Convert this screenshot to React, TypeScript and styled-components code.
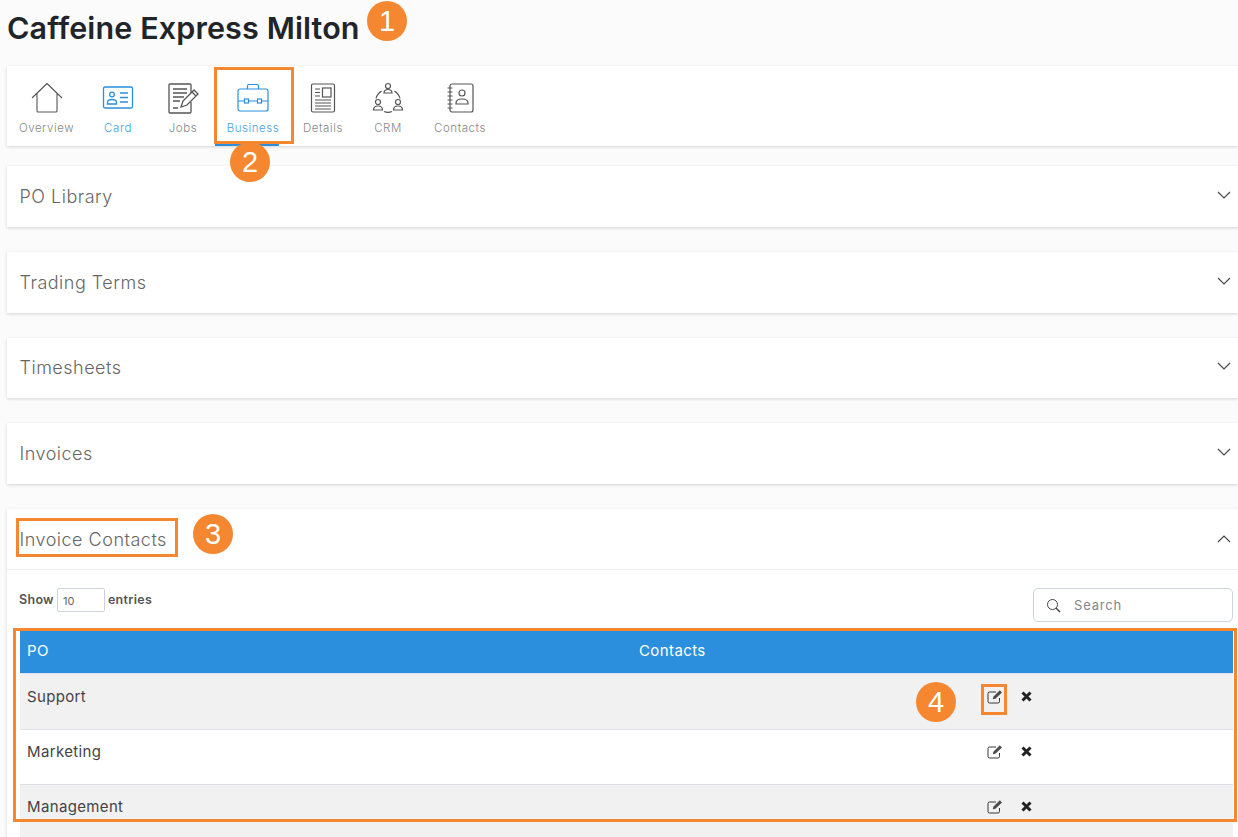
import styled, { createGlobalStyle } from "styled-components";

const GlobalStyle = createGlobalStyle`
  html, body {
    margin: 0;
    padding: 0;
    height: 837px;
    overflow: hidden;
    background: #fbfbfb;
    font-family: Inter, "Liberation Sans", sans-serif;
  }
  * {
    box-sizing: border-box;
  }
`;

const Page = styled.div`
  position: relative;
  width: 1238px;
  height: 837px;
  overflow: hidden;
  padding-left: 7px;
`;

const Title = styled.h1`
  margin: 0;
  height: 66px;
  padding-top: 10px;
  font-size: 30.5px;
  line-height: 36px;
  font-weight: 600;
  letter-spacing: 0.12px;
  color: #212529;
`;

const Card = styled.section`
  width: 1231px;
  background: #fff;
  box-shadow: 0 1px 3px rgba(0, 0, 0, 0.16);
`;

const Nav = styled(Card)`
  display: flex;
  height: 80px;
  padding-left: 5px;
  margin-bottom: 20px;
`;

interface ITab {
  $width: number;
  $blue?: boolean;
  $active?: boolean;
}

const Tab = styled.div<ITab>`
  position: relative;
  width: ${(props) => props.$width}px;
  height: 80px;
  padding-top: 16px;
  display: flex;
  flex-direction: column;
  align-items: center;
  color: ${(props) => (props.$blue ? "#2b8fdd" : "#555")};
  svg {
    display: block;
  }
  &::after {
    content: "";
    display: ${(props) => (props.$active ? "block" : "none")};
    position: absolute;
    left: 4px;
    bottom: 0;
    width: 64px;
    height: 3px;
    background: #2b8fdd;
  }
`;

const TabLabel = styled.span<{ $blue?: boolean }>`
  margin-top: 6px;
  font-size: 11.5px;
  line-height: 16px;
  font-weight: 300;
  letter-spacing: 0.55px;
  color: ${(props) => (props.$blue ? "#4a9fe2" : "#888")};
`;

const Accordion = styled(Card)`
  height: 60.75px;
  margin-bottom: 25px;
  padding: 0 7px 0 12.5px;
  display: flex;
  align-items: center;
  justify-content: space-between;
`;

const AccordionTitle = styled.span`
  font-size: 18px;
  font-weight: 300;
  letter-spacing: 0.5px;
  color: #666;
`;

const OpenCard = styled(Card)`
  padding: 0 5px 40px 13px;
`;

const OpenHeader = styled.div`
  height: 61px;
  margin: 0 -5px 0 -13px;
  padding: 0 7px 0 12.5px;
  border-bottom: 1px solid #f0f0f0;
  display: flex;
  align-items: center;
  justify-content: space-between;
`;

const Controls = styled.div`
  height: 61px;
  padding-top: 18px;
  margin-left: -1px;
  display: flex;
  justify-content: space-between;
  align-items: flex-start;
`;

const Show = styled.label`
  display: flex;
  align-items: center;
  gap: 3px;
  font-size: 12.5px;
  line-height: 24px;
  font-weight: 600;
  letter-spacing: 0.3px;
  color: #555;
`;

const EntriesInput = styled.div`
  width: 48px;
  height: 24px;
  border: 1px solid #ced4da;
  border-radius: 2px;
  padding-left: 5px;
  font-size: 11px;
  line-height: 24px;
  font-weight: 400;
  letter-spacing: 0;
  color: #666;
`;

const SearchBox = styled.div`
  width: 200px;
  height: 34px;
  border: 1px solid #ced4da;
  border-radius: 5px;
  padding-left: 12px;
  display: flex;
  align-items: center;
  gap: 13px;
  font-size: 13px;
  letter-spacing: 0.8px;
  color: #80868f;
`;

const Table = styled.table`
  width: 1213px;
  border-collapse: collapse;
  table-layout: fixed;
`;

const HeadCell = styled.th<{ $width?: number }>`
  width: ${(props) => (props.$width ? `${props.$width}px` : "auto")};
  height: 42px;
  padding: 0 7px 2px;
  background: #2b8fdd;
  color: #fff;
  text-align: left;
  font-size: 15px;
  font-weight: 400;
  letter-spacing: 0.4px;
`;

const Cell = styled.td`
  padding: 12px 7px 0;
  vertical-align: top;
  font-size: 15px;
  line-height: 20px;
  font-weight: 400;
  letter-spacing: 0.35px;
  color: #444;
`;

const Row = styled.tr<{ $height: number; $striped?: boolean }>`
  height: ${(props) => props.$height}px;
  background: ${(props) => (props.$striped ? "#f1f1f1" : "#fff")};
  border-top: 1px solid #dee0e6;
  &:first-child ${Cell} {
    padding-top: 13px;
  }
`;

const Actions = styled.div`
  display: flex;
  align-items: flex-start;
  gap: 18px;
  padding-top: 2px;
  color: #222;
`;

const Highlight = styled.div<{ $x: number; $y: number; $w: number; $h: number }>`
  position: absolute;
  left: ${(props) => props.$x}px;
  top: ${(props) => props.$y}px;
  width: ${(props) => props.$w}px;
  height: ${(props) => props.$h}px;
  border: 3px solid #f58731;
  pointer-events: none;
`;

const Marker = styled.div<{ $x: number; $y: number }>`
  position: absolute;
  left: ${(props) => props.$x - 20}px;
  top: ${(props) => props.$y - 20}px;
  width: 40px;
  height: 40px;
  border-radius: 50%;
  background: #f58731;
  color: #fff;
  display: flex;
  align-items: center;
  justify-content: center;
  font-family: "Liberation Sans", Arial, sans-serif;
  font-size: 29px;
`;

const Chevron = ({ up }: { up?: boolean }) => (
  <svg width="14" height="9" viewBox="0 0 14 9" fill="none" stroke="#444" strokeWidth="1.1" style={{ marginBottom: 2 }}>
    <path d={up ? "M1 8l6-6 6 6" : "M1 1l6 6 6-6"} />
  </svg>
);

const HouseIcon = () => (
  <svg width="32" height="32" viewBox="0 0 32 32" fill="none" stroke="currentColor" strokeWidth="1.1" strokeLinejoin="round">
    <path d="M1 16L16 1.500 31 16M6 11.500V29a1 1 0 0 0 1 1h18a1 1 0 0 0 1-1V11.500" />
  </svg>
);

const CardIcon = () => (
  <svg width="32" height="32" viewBox="0 0 32 32" fill="none" stroke="currentColor" strokeWidth="1.3">
    <rect x="1.500" y="5" width="29" height="21" rx="1.500" />
    <circle cx="10" cy="12.500" r="2.300" />
    <path d="M5.500 22v-1.500c0-2 2-3 4.500-3s4.500 1 4.500 3V22z" />
    <path d="M18 11h8M18 15.500h8M18 20h8" strokeWidth="1.600" />
  </svg>
);

const JobsIcon = () => (
  <svg width="32" height="32" viewBox="0 0 32 32" fill="none" stroke="currentColor" strokeWidth="1.300">
    <path d="M24 11V3a1 1 0 0 0-1-1H3a1 1 0 0 0-1 1v27a1 1 0 0 0 1 1h20a1 1 0 0 0 1-1V20" />
    <path d="M6 7h14M6 11h14M6 15h11M6 19h7M6 26h5" />
    <path d="M14 25l2-6L27 8l4 4-11 11zM25 10l4 4" />
  </svg>
);

const CaseIcon = () => (
  <svg width="32" height="32" viewBox="0 0 32 32" fill="none" stroke="currentColor" strokeWidth="1.200">
    <rect x="1" y="7" width="30" height="22" rx="2" />
    <path d="M10.500 7V4A1.500 1.500 0 0 1 12 2.500h8A1.500 1.500 0 0 1 21.500 4v3M1 19h6.500M11.500 19h9M24.500 19H31" />
    <rect x="7.500" y="17" width="4" height="4" />
    <rect x="20.500" y="17" width="4" height="4" />
  </svg>
);

const DetailsIcon = () => (
  <svg width="32" height="32" viewBox="0 0 32 32" fill="none" stroke="currentColor" strokeWidth="1.200">
    <rect x="4.500" y="2" width="23" height="28" rx="1.500" />
    <path d="M8 7h5M8 10.500h5M8 14h5" />
    <rect x="15.500" y="6" width="8.500" height="9" />
    <path d="M8 18h16M8 21h16M8 24h16M8 27h16" />
  </svg>
);

const CrmIcon = () => (
  <svg width="32" height="32" viewBox="0 0 32 32" fill="none" stroke="currentColor" strokeWidth="1.200">
    <circle cx="16" cy="4" r="2.500" />
    <path d="M12 11c0-2.500 2-3.500 4-3.500s4 1 4 3.500z" />
    <circle cx="6" cy="20" r="2.500" />
    <path d="M1.500 28c0-3 2-4 4.500-4s4.500 1 4.500 4z" />
    <circle cx="26" cy="20" r="2.500" />
    <path d="M21.500 28c0-3 2-4 4.500-4s4.500 1 4.500 4z" />
    <path d="M9.500 9C6 11.500 4.500 14 4 16.500M22.500 9c3.500 2.500 5 5 5.500 7.500M12 29.500c2.500 1 5.500 1 8 0" />
  </svg>
);

const ContactsIcon = () => (
  <svg width="32" height="32" viewBox="0 0 32 32" fill="none" stroke="currentColor" strokeWidth="1.200">
    <rect x="6" y="2" width="23" height="28" rx="2" />
    <path d="M3.500 6h5M3.500 10h5M3.500 14h5M3.500 18h5M3.500 22h5M3.500 26h5" />
    <circle cx="18" cy="11" r="3" />
    <path d="M12 22v-1c0-2.500 2.500-4 6-4s6 1.500 6 4v1z" />
  </svg>
);

const SearchIcon = () => (
  <svg width="15" height="15" viewBox="0 0 15 15" fill="none" stroke="#444" strokeWidth="1">
    <circle cx="6.500" cy="6.500" r="5" />
    <path d="M10 10l4 4" strokeWidth="1.400" />
  </svg>
);

const EditIcon = () => (
  <svg width="16" height="15" viewBox="0 0 16 15" fill="none" stroke="currentColor" strokeWidth="0.9">
    <path d="M12.500 9v3.500a1.500 1.500 0 0 1-1.500 1.500H2.500A1.500 1.500 0 0 1 1 12.500v-8A1.500 1.500 0 0 1 2.500 3H9" />
    <path d="M5.800 10.200l.5-2.500L12.800 1.200 15 3.400 8.400 9.700z" fill="currentColor" fillOpacity="0.8" stroke="none" />
  </svg>
);

const RemoveIcon = () => (
  <svg width="11" height="11" viewBox="0 0 11 11" fill="none" stroke="currentColor" strokeWidth="3" style={{ marginTop: 2 }}>
    <path d="M1.500 1.500l8 8M9.500 1.500l-8 8" />
  </svg>
);

const tabs = [
  { label: "Overview", width: 69, icon: <HouseIcon /> },
  { label: "Card", width: 74, icon: <CardIcon />, blue: true },
  { label: "Jobs", width: 56, icon: <JobsIcon /> },
  { label: "Business", width: 84, icon: <CaseIcon />, blue: true, active: true },
  { label: "Details", width: 56, icon: <DetailsIcon /> },
  { label: "CRM", width: 74, icon: <CrmIcon /> },
  { label: "Contacts", width: 70, icon: <ContactsIcon /> },
];

const rows = [
  { name: "Support", height: 56, striped: true },
  { name: "Marketing", height: 55, striped: false },
  { name: "Management", height: 70, striped: true },
];

function App() {
  return (
    <Page>
      <GlobalStyle />
      <Title>Caffeine Express Milton</Title>

      <Nav>
        {tabs.map((tab) => (
          <Tab key={tab.label} $width={tab.width} $blue={tab.blue} $active={tab.active}>
            {tab.icon}
            <TabLabel $blue={tab.blue}>{tab.label}</TabLabel>
          </Tab>
        ))}
      </Nav>

      {["PO Library", "Trading Terms", "Timesheets", "Invoices"].map((name) => (
        <Accordion key={name}>
          <AccordionTitle>{name}</AccordionTitle>
          <Chevron />
        </Accordion>
      ))}

      <OpenCard>
        <OpenHeader>
          <AccordionTitle>Invoice Contacts</AccordionTitle>
          <Chevron up />
        </OpenHeader>
        <Controls>
          <Show>
            Show <EntriesInput>10</EntriesInput> entries
          </Show>
          <SearchBox>
            <SearchIcon />
            Search
          </SearchBox>
        </Controls>
        <Table>
          <thead>
            <tr>
              <HeadCell $width={612}>PO</HeadCell>
              <HeadCell $width={348}>Contacts</HeadCell>
              <HeadCell />
            </tr>
          </thead>
          <tbody>
            {rows.map((row) => (
              <Row key={row.name} $height={row.height} $striped={row.striped}>
                <Cell>{row.name}</Cell>
                <Cell />
                <Cell>
                  <Actions>
                    <EditIcon />
                    <RemoveIcon />
                  </Actions>
                </Cell>
              </Row>
            ))}
          </tbody>
        </Table>
      </OpenCard>

      <Highlight $x={214} $y={67} $w={80} $h={77} />
      <Highlight $x={16} $y={518} $w={162} $h={39} />
      <Highlight $x={981} $y={684} $w={26} $h={31} />
      <Highlight $x={13} $y={628} $w={1224} $h={194} />
      <Marker $x={387} $y={21}>1</Marker>
      <Marker $x={250} $y={162}>2</Marker>
      <Marker $x={213} $y={534}>3</Marker>
      <Marker $x={936} $y={702}>4</Marker>
    </Page>
  );
}

export default App;
